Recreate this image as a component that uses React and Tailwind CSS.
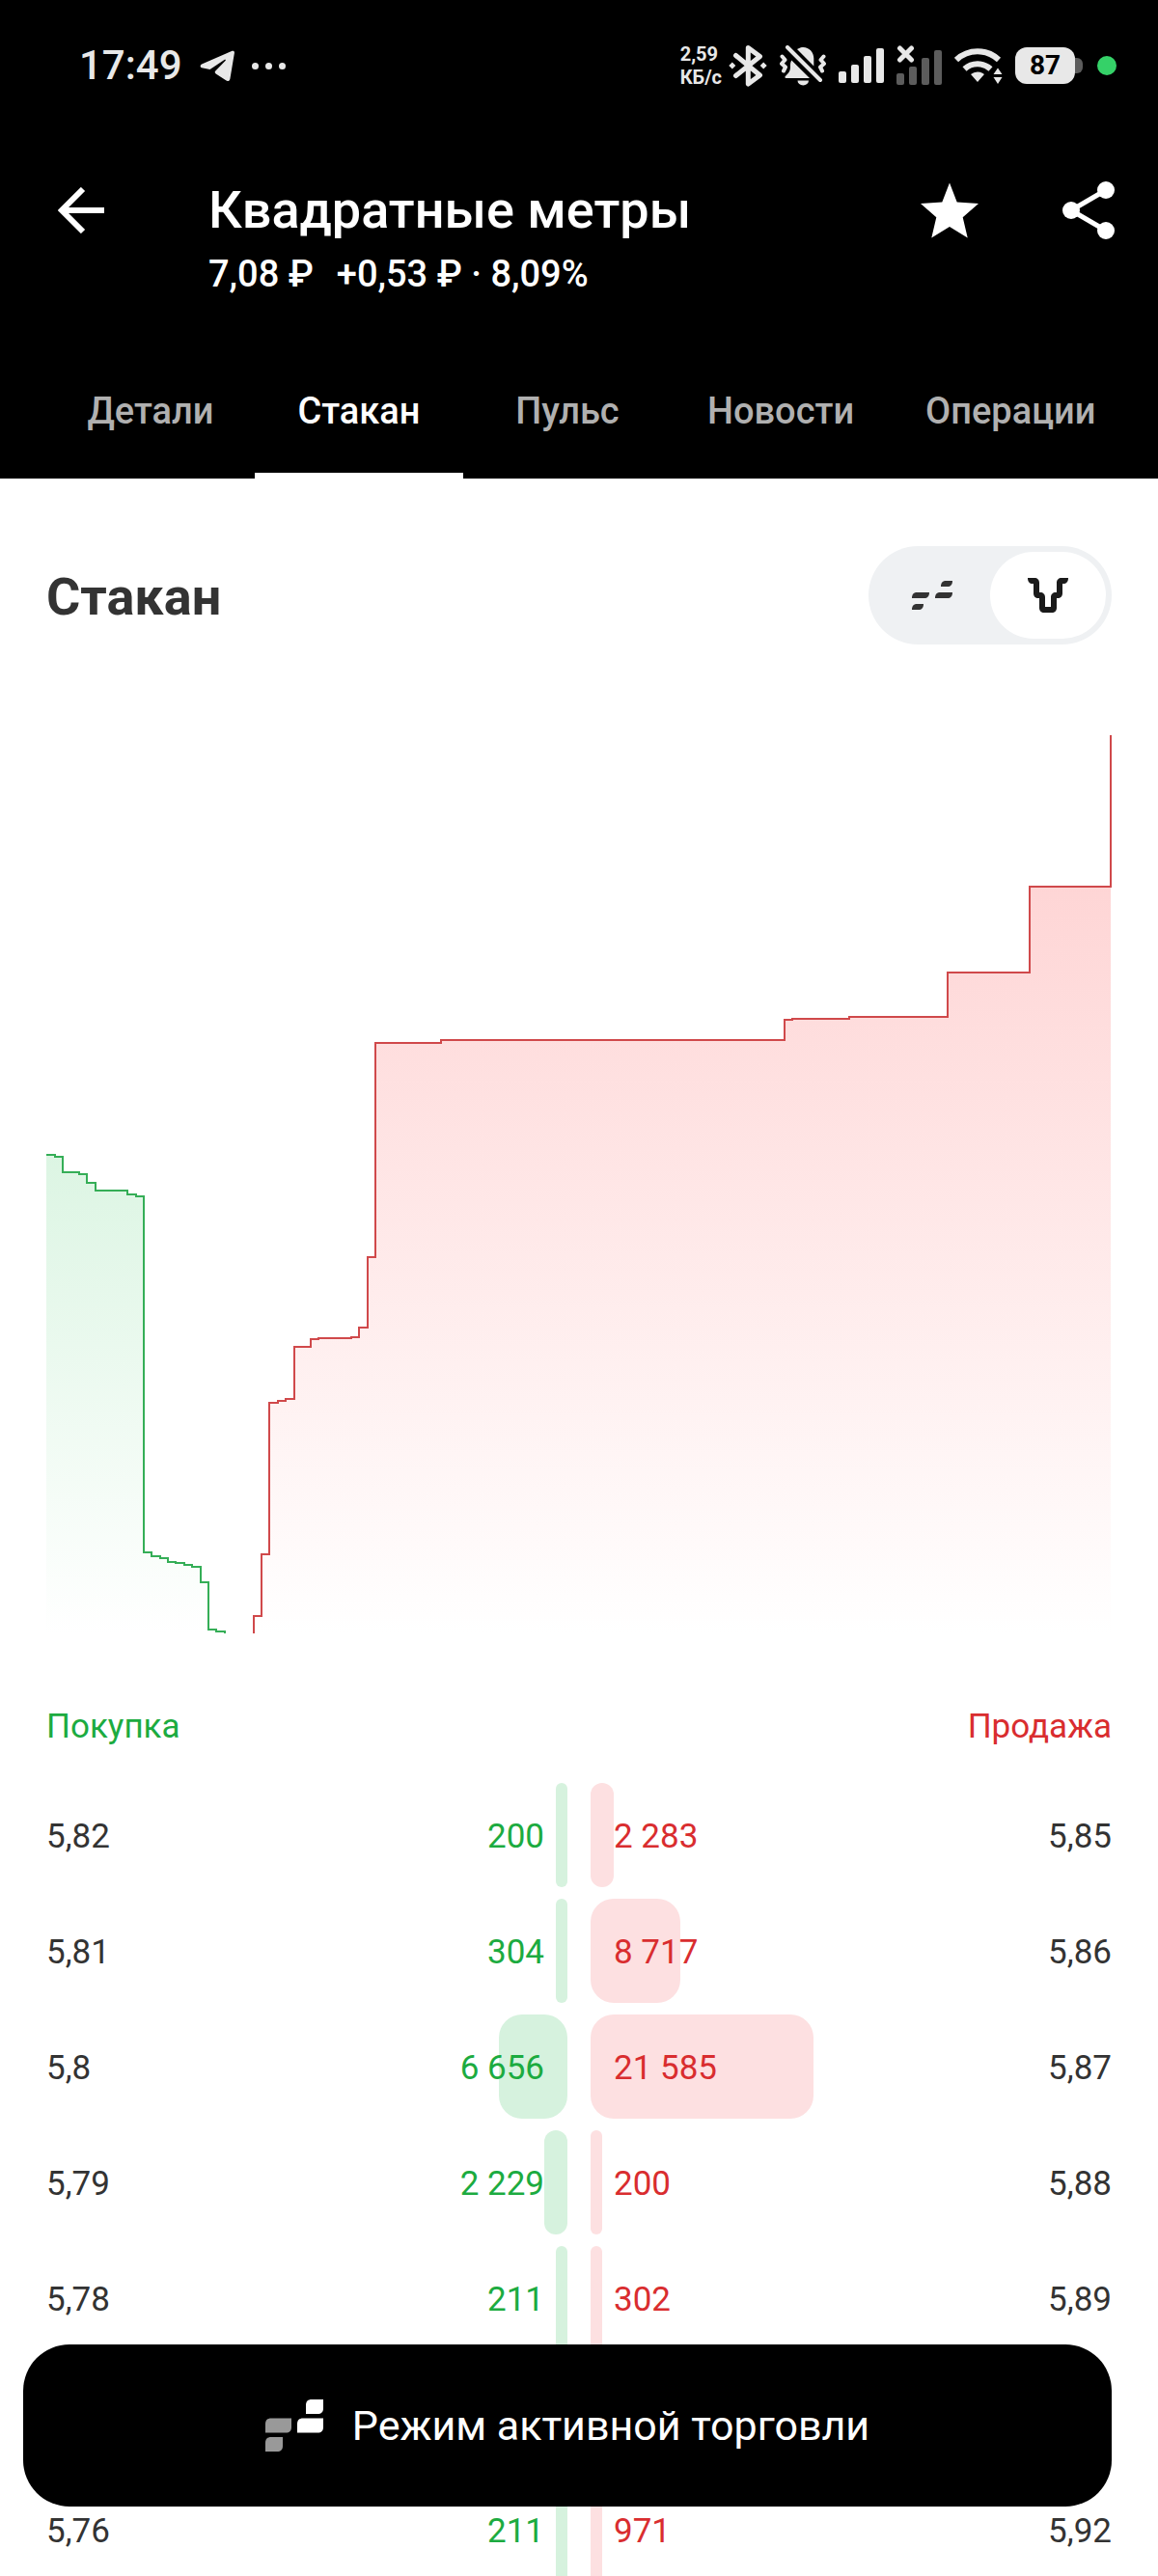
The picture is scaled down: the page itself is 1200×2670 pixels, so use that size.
import { useState } from "react";
import clsx from "clsx";

const TABS = ["Детали", "Стакан", "Пульс", "Новости", "Операции"];

// An empty level keeps its place in the ladder
const BIDS = [
  { price: "5,82", volume: 200 },
  { price: "5,81", volume: 304 },
  { price: "5,8", volume: 6656 },
  { price: "5,79", volume: 2229 },
  { price: "5,78", volume: 211 },
  { price: "", volume: 0 },
  { price: "5,76", volume: 211 },
];

const ASKS = [
  { price: "5,85", volume: 2283 },
  { price: "5,86", volume: 8717 },
  { price: "5,87", volume: 21585 },
  { price: "5,88", volume: 200 },
  { price: "5,89", volume: 302 },
  { price: "", volume: 0 },
  { price: "5,92", volume: 971 },
];

// Volume that would fill a whole column
const FULL_VOLUME = 50460;

const CHART_WIDTH = 1104;
const CHART_HEIGHT = 931;

// [x where the step ends, y of the step]
const BID_STEPS = [
  [9, 435], [17, 437], [34, 453], [42, 455], [51, 464], [84, 472], [93, 476],
  [101, 478], [109, 847], [118, 851], [126, 853], [134, 857], [143, 858],
  [151, 860], [160, 862], [168, 878], [176, 927], [185, 929],
];

const ASK_STEPS = [
  [223, 913], [231, 849], [240, 692], [248, 690], [257, 688], [274, 634],
  [282, 626], [316, 625], [324, 624], [333, 614], [341, 541], [409, 319],
  [765, 316], [773, 295], [832, 294], [934, 292], [1019, 246], [1103, 157],
];

const formatVolume = (value) =>
  String(value).replace(/\B(?=(\d{3})+$)/g, "\u00a0");

const stepPath = (startX, steps) => {
  let d = `M${startX} ${steps[0][1]}`;
  steps.forEach(([x, y]) => {
    d += `V${y}H${x}`;
  });
  return d;
};

const ArrowIcon = () => (
  <svg viewBox="0 0 48 48" className="h-12 w-12" fill="none" stroke="currentColor" strokeWidth="6">
    <path d="M48 24H4M26 2 4 24l22 22" />
  </svg>
);

const StarIcon = () => (
  <svg viewBox="0 0 60 58" className="h-[58px] w-[60px]" fill="currentColor">
    <path d="M30 .5l7.7 20 22.3 1.4-16.3 14.3 5 21.3L30 46 11.3 57.5l5-21.3L0 21.9l22.3-1.4z" />
  </svg>
);

const ShareIcon = () => (
  <svg viewBox="0 0 54 60" className="h-[60px] w-[54px]" fill="currentColor">
    <path d="M45 9 9 30l36 21" fill="none" stroke="currentColor" strokeWidth="5" />
    <circle cx="45" cy="9" r="9" />
    <circle cx="9" cy="30" r="9" />
    <circle cx="45" cy="51" r="9" />
  </svg>
);

const TelegramIcon = () => (
  <svg viewBox="0 0 36 32" className="h-8 w-9" fill="currentColor">
    <path d="M33 1 2 14.5c-2 1-1.6 3.300 0 3.700l8.500 1.800L25.500 10c1.200-.7 1.800 0 1 .9L16.300 21.500c-1 1-.8 2 .4 3l10.800 7c2 1.200 3.500.3 3.900-1.800L35.900 3c.3-2-1-2.800-2.900-2z" />
  </svg>
);

const BluetoothIcon = () => (
  <svg viewBox="0 0 40 44" className="h-11 w-10" fill="none" stroke="currentColor" strokeWidth="5" strokeLinecap="round" strokeLinejoin="round">
    <path d="M7.500 11.500 32.500 32 20.300 41V3.500L32.500 12.500 7.500 32.500" />
    <path d="M3.800 18.500 7.300 22l-3.500 3.500L.3 22zM36.200 18.500l3.500 3.500-3.500 3.500-3.500-3.500z" fill="currentColor" stroke="none" />
  </svg>
);

const BellOffIcon = () => (
  <svg viewBox="0 0 48 42" className="h-[42px] w-12" fill="currentColor">
    <path d="M18 4c8-5.500 17.300.5 17.300 9.500v8zM12.300 15.500 31 34H6.500c-1.200 0-1.500-1-.8-1.800 4-4 5.300-5.500 5.300-10.200 0-3 0-4.500 1.300-6.500zM18.500 36.500h11.500a5.700 5 0 0 1-11.500 0z" />
    <path d="M8 2l34 34" fill="none" stroke="currentColor" strokeWidth="4" strokeLinecap="round" />
    <path d="M2.500 11.500 5.500 15l-3.500 4 4 3.500L4 26.500M45.500 11.500l-3 3.500 3.500 4-4 3.500 2 4" fill="none" stroke="currentColor" strokeWidth="4" strokeLinecap="round" strokeLinejoin="round" />
  </svg>
);

const SignalIcon = () => (
  <svg viewBox="0 0 47 36" className="h-9 w-[47px]" fill="currentColor">
    <rect x="0" y="24" width="8" height="12" rx="2" />
    <rect x="13" y="17" width="8" height="19" rx="2" />
    <rect x="26" y="8" width="8" height="28" rx="2" />
    <rect x="39" y="0" width="8" height="36" rx="2" />
  </svg>
);

const NoSimIcon = () => (
  <svg viewBox="0 0 47 42" className="h-[42px] w-[47px]">
    <g fill="#5c5c5c">
      <rect x="0" y="29" width="8" height="12" rx="2" />
      <rect x="13" y="22" width="8" height="19" rx="2" />
      <rect x="26" y="13" width="8" height="28" rx="2" />
      <rect x="39" y="5" width="8" height="36" rx="2" />
    </g>
    <path d="M3.500 3l12 12M15.500 3l-12 12" stroke="currentColor" strokeWidth="5" strokeLinecap="round" />
  </svg>
);

const WifiIcon = () => (
  <svg viewBox="0 0 50 37" className="h-[37px] w-[50px]" fill="none" stroke="currentColor" strokeWidth="6">
    <path d="M2 12a32 32 0 0 1 44 0M10.500 21.500a20 20 0 0 1 27 0" />
    <path d="M17 27a11 11 0 0 1 14 0L24 35zM45 20.500l4.500 6.500h-9zM45 37l-4.500-7h9z" fill="currentColor" stroke="none" />
  </svg>
);

const LadderIcon = () => (
  <svg viewBox="0 0 42 30" className="h-[30px] w-[42px]" fill="currentColor">
    <path d="M35 0h7c0 4-2 6-5 6h-7c0-4 2-6 5-6zM29 12h13c0 4-2 6-5 6H24c0-4 2-6 5-6zM5 12h13c0 4-2 6-5 6H0c0-4 2-6 5-6zM5 24h7c0 4-2 6-5 6H0c0-4 2-6 5-6z" />
  </svg>
);

const BullIcon = () => (
  <svg viewBox="0 0 42 36" className="h-9 w-[42px]" fill="currentColor">
    <path d="M0 0h7c3 0 5 2 5 5v10h1c3 0 5 2 5 5v10h6V20c0-3 2-5 5-5h1V5c0-3 2-5 5-5h7c0 4-2 6-5 6h-1v10c0 3-2 5-5 5h-1v10c0 3-2 5-5 5h-8c-3 0-5-2-5-5V21h-1c-3 0-5-2-5-5V6H5C2 6 0 4 0 0z" />
  </svg>
);

const TradeIcon = () => (
  <svg viewBox="0 0 60 54" className="h-[54px] w-[60px]">
    <path d="M48 0h12v9c0 4-2 6-6 6H42V6c0-4 2-6 6-6zM39 19.500h21v9c0 4-2 6-6 6H33v-9c0-4 2-6 6-6z" fill="#fff" />
    <path d="M6 19.500h21v9c0 4-2 6-6 6H0v-9c0-4 2-6 6-6zM6 39h12v9c0 4-2 6-6 6H0v-9c0-4 2-6 6-6z" fill="#999" />
  </svg>
);

const StatusBar = () => (
  <div className="flex h-[136px] items-center justify-between pr-[43px] pl-[82px] text-[#e8e8e8]">
    <div className="flex items-center gap-[18px]">
      <span className="text-[42px] leading-none font-medium">17:49</span>
      <TelegramIcon />
      <span className="flex gap-[7px]">
        <span className="h-[7px] w-[7px] rounded-full bg-current" />
        <span className="h-[7px] w-[7px] rounded-full bg-current" />
        <span className="h-[7px] w-[7px] rounded-full bg-current" />
      </span>
    </div>
    <div className="flex items-center gap-[13px]">
      <span className="-mr-1.5 text-xl leading-6 font-bold">
        2,59
        <br />
        КБ/с
      </span>
      <BluetoothIcon />
      <BellOffIcon />
      <SignalIcon />
      <NoSimIcon />
      <WifiIcon />
      <span className="flex items-center">
        <span className="flex h-[38px] w-[62px] items-center justify-center rounded-xl bg-current">
          <span className="text-[28px] leading-none font-bold text-black">87</span>
        </span>
        <span className="h-4 w-2 rounded-r-md bg-[#5c5c5c]" />
      </span>
      <span className="ml-0.5 h-5 w-5 rounded-full bg-[#35d168]" />
    </div>
  </div>
);

const Header = ({ activeTab, onTabChange }) => (
  <header className="bg-black text-white">
    <StatusBar />
    <div className="flex items-start pt-[50px] pr-[45px] pb-10 pl-[60px]">
      <button aria-label="Назад" className="flex h-16 items-center">
        <ArrowIcon />
      </button>
      <div className="ml-[108px] flex-1">
        <h1 className="text-[54px] leading-16 font-medium">Квадратные метры</h1>
        <p className="mt-0.5 flex gap-6 text-[38px] leading-16 font-medium">
          <span>7,08 ₽</span>
          <span>+0,53 ₽ · 8,09%</span>
        </p>
      </div>
      <div className="flex items-center gap-[87px]">
        <button aria-label="В избранное" className="flex h-16 items-center">
          <StarIcon />
        </button>
        <button aria-label="Поделиться" className="flex h-16 items-center">
          <ShareIcon />
        </button>
      </div>
    </div>
    <nav className="flex pl-12" role="tablist">
      {TABS.map((tab) => (
        <button
          key={tab}
          role="tab"
          aria-selected={tab === activeTab}
          onClick={() => onTabChange(tab)}
          className={clsx(
            "h-[140px] min-w-[216px] border-y-6 border-transparent px-[37px] text-[38px] font-medium",
            tab === activeTab ? "border-b-white text-white" : "text-[#b0b0b0]"
          )}
        >
          {tab}
        </button>
      ))}
    </nav>
  </header>
);

const ViewToggle = ({ view, onChange }) => (
  <div className="flex rounded-full bg-[#eff1f3] p-1.5">
    <button
      aria-label="Стакан"
      aria-pressed={view === "ladder"}
      onClick={() => onChange("ladder")}
      className={clsx(
        "flex h-[90px] w-[120px] items-center justify-center rounded-full text-[#333]",
        view === "ladder" && "bg-white"
      )}
    >
      <LadderIcon />
    </button>
    <button
      aria-label="График"
      aria-pressed={view === "chart"}
      onClick={() => onChange("chart")}
      className={clsx(
        "flex h-[90px] w-[120px] items-center justify-center rounded-full text-[#1a1a1a]",
        view === "chart" && "bg-white"
      )}
    >
      <BullIcon />
    </button>
  </div>
);

const DepthChart = () => {
  const bidLine = stepPath(0, BID_STEPS) + `V${CHART_HEIGHT}`;
  const askLine = `M215 ${CHART_HEIGHT}` + stepPath(215, ASK_STEPS).replace("M", "L");

  return (
    <svg viewBox={`0 0 ${CHART_WIDTH} ${CHART_HEIGHT}`} className="block w-full" fill="none">
      <defs>
        <linearGradient id="bids" gradientUnits="userSpaceOnUse" x1="0" y1="433" x2="0" y2={CHART_HEIGHT}>
          <stop stopColor="#dcf5e3" />
          <stop offset="1" stopColor="#dcf5e3" stopOpacity="0" />
        </linearGradient>
        <linearGradient id="asks" gradientUnits="userSpaceOnUse" x1="0" y1="0" x2="0" y2={CHART_HEIGHT}>
          <stop stopColor="#fecdcd" />
          <stop offset="1" stopColor="#fecdcd" stopOpacity="0" />
        </linearGradient>
      </defs>
      <path d={`${bidLine}H0Z`} fill="url(#bids)" />
      <path d={`${askLine}V${CHART_HEIGHT}Z`} fill="url(#asks)" />
      <path d={bidLine} stroke="#35ae57" strokeWidth="2" />
      <path d={`${askLine}V0`} stroke="#d0494b" strokeWidth="2" />
    </svg>
  );
};

const OrderTable = ({ side, title, rows }) => {
  const isBid = side === "bid";

  return (
    <table className="w-full table-fixed text-[35px] text-[#333]">
      <thead>
        <tr className="h-[104px]">
          <th
            colSpan={2}
            className={clsx("p-0 font-normal", isBid ? "text-left text-[#1cab40]" : "text-right text-[#d92d2f]")}
          >
            {title}
          </th>
        </tr>
      </thead>
      <tbody>
        {rows.map(({ price, volume }, index) => {
          const priceCell = (
            <td className={clsx("p-0 pt-1", isBid ? "text-left" : "text-right")}>{price}</td>
          );
          const volumeCell = (
            <td className={clsx("p-0 pt-1", isBid ? "pr-6 text-right text-[#1cab40]" : "pl-6 text-left text-[#d92d2f]")}>
              <span
                className={clsx(
                  "absolute inset-y-1.5 min-w-3 rounded-3xl",
                  isBid ? "right-0 bg-[#d6f2de]" : "left-0 bg-[#fde0e1]"
                )}
                style={{ width: `${(volume / FULL_VOLUME) * 100}%` }}
              />
              {volume > 0 && <span className="relative">{formatVolume(volume)}</span>}
            </td>
          );

          return (
            <tr key={index} className="relative h-[120px]">
              {isBid ? priceCell : volumeCell}
              {isBid ? volumeCell : priceCell}
            </tr>
          );
        })}
      </tbody>
    </table>
  );
};

const App = () => {
  const [activeTab, setActiveTab] = useState("Стакан");
  const [view, setView] = useState("chart");

  return (
    <div className="flex h-screen flex-col bg-white font-[Roboto,sans-serif]">
      <Header activeTab={activeTab} onTabChange={setActiveTab} />

      <main className="min-h-0 flex-1 overflow-y-auto px-12 pt-[70px] [scrollbar-width:none]">
        <div className="flex items-center justify-between">
          <h2 className="pt-1 text-[54px] leading-16 font-bold text-[#333]">Стакан</h2>
          <ViewToggle view={view} onChange={setView} />
        </div>

        <div className="mt-[94px]">
          <DepthChart />
        </div>

        {/* Order book */}
        <div className="mt-[45px] grid grid-cols-2 gap-6">
          <OrderTable side="bid" title="Покупка" rows={BIDS} />
          <OrderTable side="ask" title="Продажа" rows={ASKS} />
        </div>
      </main>

      {/* Floating action */}
      <button className="fixed right-12 bottom-18 left-6 flex h-[168px] items-center justify-center gap-[30px] rounded-[48px] bg-black text-[43px] text-white">
        <TradeIcon />
        Режим активной торговли
      </button>
    </div>
  );
};

export default App;
